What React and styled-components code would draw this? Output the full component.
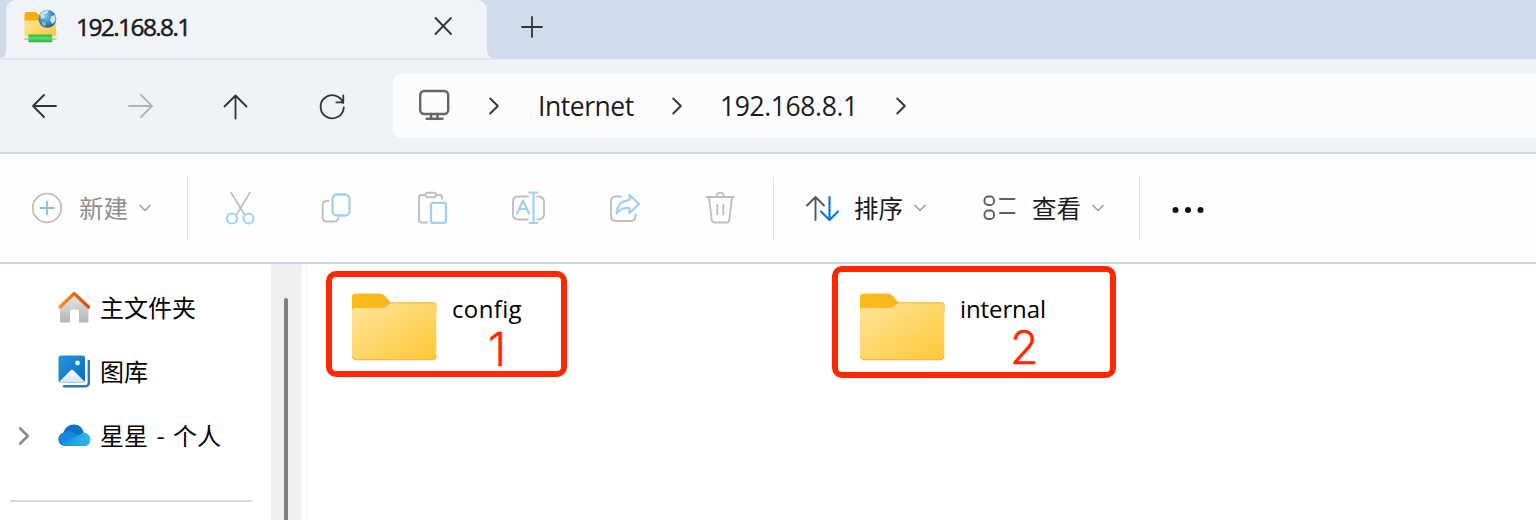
import React from 'react';
import styled, { createGlobalStyle } from 'styled-components';

const Global = createGlobalStyle`
  * { box-sizing: border-box; }
  body {
    margin: 0;
    overflow: hidden;
    background: #fff;
    font-family: "Open Sans", "Noto Sans CJK SC", sans-serif;
    color: #1b1b1b;
  }
  svg { display: block; flex: none; overflow: visible; }
`;

const Window = styled.div`
  width: 1536px;
  height: 520px;
  display: flex;
  flex-direction: column;
  overflow: hidden;
  background: #fff;
`;

const TabStrip = styled.div`
  height: 60px;
  flex: none;
  display: flex;
  background: #f0f4f9;
  border-bottom: 2px solid #dde6f0;
`;

const StripEdge = styled.div`
  width: 6px;
  background: #ccdaeb;
  border-bottom-right-radius: 6px;
`;

const TabSlot = styled.div`
  width: 481px;
  background: #cfdcec;
`;

const Tab = styled.div`
  height: 58px;
  display: flex;
  align-items: center;
  padding: 0 34px 4px 18px;
  background: #f0f4f9;
  border-radius: 10px 10px 0 0;
`;

const TabTitle = styled.span`
  flex: 1;
  margin-left: 18px;
  font-size: 24.5px;
  line-height: 32px;
  letter-spacing: -1.6px;
  -webkit-text-stroke: 0.5px #1b1b1b;
`;

const StripRest = styled.div`
  flex: 1;
  display: flex;
  align-items: center;
  padding: 0 0 3px 35px;
  background: #cfdcec;
  border-bottom: 1px solid #c3d1e2;
  border-bottom-left-radius: 8px;
`;

const NavBar = styled.div`
  height: 94px;
  flex: none;
  display: flex;
  align-items: center;
  padding: 0 0 1px 28px;
  background: #eff3f8;
  border-bottom: 2px solid #d0d9e5;
`;

const IconRow = styled.div`
  display: flex;
  gap: 64px;
`;

const AddressBar = styled.div`
  flex: 1;
  height: 64px;
  margin-left: 45px;
  padding-left: 25px;
  display: flex;
  align-items: center;
  background: #fbfcfe;
  border-radius: 8px 0 0 8px;
`;

const CrumbGap = styled.div`
  width: 39px;
`;

const Crumb = styled.span`
  width: ${(p) => p.$width}px;
  margin: 0 ${(p) => p.$after}px 0 ${(p) => p.$before}px;
  font-size: 26.5px;
  line-height: 36px;
  white-space: nowrap;
  letter-spacing: ${(p) => p.$tracking}px;
`;

const CommandBar = styled.div`
  height: 110px;
  flex: none;
  display: flex;
  align-items: center;
  padding-left: 31px;
  background: #fefefe;
  border-bottom: 2px solid #c9d3e1;
`;

const Command = styled.div`
  display: flex;
  align-items: center;
  width: ${(p) => p.$width}px;
  color: ${(p) => (p.$disabled ? '#8f8f8f' : '#1b1b1b')};
`;

const CommandLabel = styled.span`
  width: 48px;
  margin: 0 12px 0 ${(p) => p.$gap}px;
  font-family: "Noto Sans CJK SC", sans-serif;
  font-size: 24.5px;
  line-height: 36px;
  white-space: nowrap;
`;

const Divider = styled.div`
  width: 1px;
  height: 63px;
  background: #e3e3e3;
  margin-right: ${(p) => p.$after}px;
`;

const Body = styled.div`
  flex: 1;
  display: flex;
  min-height: 0;
`;

const Sidebar = styled.div`
  width: 271px;
  padding-top: 11px;
`;

const SideItem = styled.div`
  height: 64px;
  display: flex;
  align-items: center;
`;

const Expander = styled.div`
  width: 58px;
  padding: 2px 0 0 19px;
`;

const SideLabel = styled.span`
  margin-left: 9px;
  padding-bottom: 1px;
  font-family: "Noto Sans CJK SC", sans-serif;
  font-size: 24px;
  line-height: 36px;
  word-spacing: 3px;
  color: #000;
  white-space: pre;
`;

const SideRule = styled.div`
  width: 242px;
  height: 2px;
  margin: 33px 0 0 10px;
  background: #d9d9d9;
`;

const ScrollTrack = styled.div`
  width: 31px;
  padding: 34px 0 0 13px;
  background: #efefef;
`;

const ScrollThumb = styled.div`
  width: 4px;
  height: 260px;
  border-radius: 2px 2px 0 0;
  background: #808080;
`;

const Files = styled.div`
  flex: 1;
  margin-left: 4px;
  border-left: 1px solid #f2f2f2;
  padding: 29px 0 0 45px;
  display: flex;
  align-items: flex-start;
`;

const FileItem = styled.div`
  position: relative;
  width: 508px;
  display: flex;
`;

const FileName = styled.span`
  align-self: flex-start;
  margin-left: 14px;
  font-size: 24px;
  line-height: 32px;
  letter-spacing: ${(p) => p.$tracking}px;
  color: #000;
`;

const Marker = styled.div`
  position: absolute;
  left: ${(p) => p.$x}px;
  top: ${(p) => p.$y}px;
  width: ${(p) => p.$w}px;
  height: ${(p) => p.$h}px;
  border: 6px solid #ff2600;
  border-radius: 10px;
`;

const MarkerNumber = styled.span`
  position: absolute;
  left: ${(p) => p.$x}px;
  top: ${(p) => p.$y}px;
  font-family: Inter, sans-serif;
  font-size: 46.5px;
  font-weight: 300;
  -webkit-text-stroke: 0.4px #ff2600;
  line-height: 36px;
  color: #ff2600;
`;

const GREY = '#bfbfbf';
const BLUE = '#a3d0f2';

const Glyph = ({ w = 32, h = 32, stroke = '#333', sw = 1.8, children }) => (
  <svg width={w} height={h} viewBox={`0 0 ${w} ${h}`} fill="none" stroke={stroke}
    strokeWidth={sw} strokeLinecap="round" strokeLinejoin="round">{children}</svg>
);

const FtpIcon = () => (
  <svg width="34" height="34" viewBox="0 0 34 34">
    <defs>
      <linearGradient id="ftpBody" x1="0" y1="0" x2="1" y2="1">
        <stop offset="0" stopColor="#ffe597" /><stop offset="1" stopColor="#ffc83a" />
      </linearGradient>
      <radialGradient id="globe" cx=".4" cy=".35" r=".7">
        <stop offset="0" stopColor="#8cc6ea" /><stop offset=".6" stopColor="#3787bd" /><stop offset="1" stopColor="#235f94" />
      </radialGradient>
      <linearGradient id="pipe" x1="0" y1="0" x2="0" y2="1">
        <stop offset="0" stopColor="#2fb943" /><stop offset=".5" stopColor="#54df69" /><stop offset="1" stopColor="#28a93d" />
      </linearGradient>
    </defs>
    <path d="M.5 4a2 2 0 0 1 2-2H12l4 4v6H.5z" fill="#fbad08" />
    <path d="M.5 10.500H32V26.300H.5z" fill="url(#ftpBody)" />
    <path d="M0 29h32.500" stroke="#c9c9c9" strokeWidth="2" />
    <rect x="4.300" y="24.500" width="24" height="7.700" rx="1" fill="url(#pipe)" />
    <circle cx="23.300" cy="8.800" r="9" fill="url(#globe)" />
    <path d="M16 4.500c3-4 7-4.500 9-4l-2 3-3 1 1 3-3.500 1.500zM27.500 6l4-1v6l-3.500 3-2-4z" fill="#c9e5f3" />
    <path d="M18 11l4 2-1 3.500-3-2z" fill="#7eb9dc" />
  </svg>
);

const Close = () => (
  <Glyph w={20} h={20}><path d="M2.500 1 18 17M18 1 2.500 17" /></Glyph>
);
const Plus = () => (
  <Glyph w={20} h={20}><path d="M10 0v20M0 10h20" /></Glyph>
);
const ArrowLeft = () => (
  <Glyph><path d="M28 16H5M16 5 5 16l11 11" /></Glyph>
);
const ArrowRight = () => (
  <Glyph stroke="#b3b3b3"><path d="M5 16h23M17 5l11 11-11 11" /></Glyph>
);
const ArrowUp = () => (
  <Glyph><path d="M15.5 28.500V5.500M4.500 16.500l11-11 11 11" /></Glyph>
);
const Refresh = () => (
  <Glyph><path d="M27.200 13A11.600 11.600 0 1 0 27.800 17.500M27.300 5.500v6.800h-7" /></Glyph>
);
const Monitor = () => (
  <Glyph stroke="#666" sw={2.400}>
    <rect x="2.200" y="1" width="28" height="23" rx="4" />
    <path d="M13 24v5M19.500 24v5M8.500 28.700h16" />
  </Glyph>
);
const Chevron = ({ stroke, sw }) => (
  <Glyph w={10} h={18} stroke={stroke} sw={sw}><path d="M1.200 1.500 8.800 9l-7.600 7.500" /></Glyph>
);
const ChevronDown = () => (
  <Glyph w={12} h={8} stroke="#a3a3a3" sw={1.700}><path d="M1 1.500l5 5 5-5" /></Glyph>
);

const NewIcon = () => (
  <Glyph stroke={GREY} sw={1.800}>
    <circle cx="16" cy="16" r="14.300" />
    <path d="M16 9.500v13M9.500 16h13" stroke="#86c0ee" />
  </Glyph>
);
const Cut = () => (
  <Glyph stroke={GREY} sw={1.700}>
    <path d="M7 .500l13.500 22M26 .500l-13.500 22" />
    <g stroke={BLUE} strokeWidth="2.200" fill="#fff"><circle cx="8" cy="26.500" r="5" /><circle cx="24.500" cy="26.500" r="5" /></g>
  </Glyph>
);
const Copy = () => (
  <Glyph stroke={GREY} sw={1.900}>
    <path d="M8.500 9H6.500Q2.700 9 2.700 13v12.500q0 4 4 4H14q3.500 0 4.500-3.500" />
    <rect x="12.500" y="2.500" width="17" height="21" rx="4.500" stroke={BLUE} strokeWidth="2.300" />
  </Glyph>
);
const Paste = () => (
  <Glyph stroke={GREY} sw={1.900}>
    <path d="M9 3H5.500Q3 3 3 5.500V28q0 2.500 2.500 2.500H11M20 3h3.500Q26 3 26 5.500V7" />
    <rect x="9.500" y=".800" width="10.500" height="4.500" rx="2.200" />
    <rect x="15" y="10.800" width="15" height="20" rx="2" stroke={BLUE} strokeWidth="2.300" />
  </Glyph>
);
const Rename = () => (
  <Glyph stroke={GREY} sw={1.900}>
    <path d="M16 4.500H6.500Q1 4.500 1 10v12q0 5.500 5.500 5.500H16M25.500 4.500Q32 4.500 32 10v12q0 5.500-6.500 5.500" />
    <g stroke={BLUE} strokeWidth="2.200"><path d="M5 21.500 11 8.500l6 13M7.500 17h7.500M21.500 1v30M17.500.500h8M17.500 31h8" /></g>
  </Glyph>
);
const Share = () => (
  <Glyph stroke={GREY} sw={1.900}>
    <path d="M13 4.500H8Q3 4.500 3 9.500V24q0 5 5 5h14.500q5 0 5-5v-1.500" />
    <path d="M21.500 3 31 12l-9.500 9v-5Q13.500 15 8.500 21.500 9.500 9 21.500 8z" stroke={BLUE} strokeWidth="2.200" />
  </Glyph>
);
const Trash = () => (
  <Glyph stroke={GREY} sw={1.900}>
    <path d="M2.500 5H30M5 5l2.700 23Q8 30.500 10.500 30.500h12q2.500 0 2.800-2.500L28 5M12.500 5q0-4.300 3.800-4.300T20 5M13.300 13v9.500M19.300 13v9.500" />
  </Glyph>
);
const Sort = () => (
  <Glyph stroke="#555" sw={1.900}>
    <path d="M8.500 28V5M0 13.500 8.500 5l8.500 8.500" />
    <path d="M22.500 5v23M14 19.500l8.500 8.500 8.500-8.500" stroke="#0b7ad4" strokeWidth="2.200" />
  </Glyph>
);
const View = () => (
  <Glyph stroke="#606060" sw={1.900}>
    <rect x="1.500" y="4.500" width="9.500" height="8.500" rx="3.600" />
    <rect x="1.500" y="18.500" width="9.500" height="8.500" rx="3.600" />
    <path d="M17 7h14.500M17 21h14.500" />
  </Glyph>
);
const More = () => (
  <svg width="34" height="11" viewBox="0 0 34 11" fill="#111">
    <circle cx="4.500" cy="7" r="3" /><circle cx="17" cy="7" r="3" /><circle cx="29.500" cy="7" r="3" />
  </svg>
);

const HomeIcon = () => (
  <svg width="33" height="32" viewBox="0 0 33 32">
    <defs>
      <linearGradient id="wall" x1="0" y1="0" x2="0" y2="1"><stop offset="0" stopColor="#e8e8e8" /><stop offset="1" stopColor="#b5b5b5" /></linearGradient>
      <linearGradient id="roof" x1="0" y1="0" x2="1" y2="0"><stop offset="0" stopColor="#f39318" /><stop offset="1" stopColor="#d94b16" /></linearGradient>
    </defs>
    <path d="M2 15 16 3l14.500 12v15q0 1.500-1.500 1.500h-8V20q0-1.500-1.500-1.500h-6Q12 18.500 12 20v11.500H3.500Q2 31.500 2 30z" fill="url(#wall)" />
    <path d="M2 16 16.200 2.500 30.500 16" fill="none" stroke="url(#roof)" strokeWidth="3.300" strokeLinecap="round" strokeLinejoin="round" />
  </svg>
);
const GalleryIcon = () => (
  <svg width="33" height="33" viewBox="0 0 33 33">
    <defs>
      <linearGradient id="photo" x1="0" y1="0" x2="1" y2="1"><stop offset="0" stopColor="#2497dc" /><stop offset="1" stopColor="#0b6bbd" /></linearGradient>
      <linearGradient id="hill" x1="0" y1="0" x2="0" y2="1"><stop offset="0" stopColor="#fff" /><stop offset="1" stopColor="#cfe5f8" /></linearGradient>
    </defs>
    <path d="M30.800 6v21.500q0 3.800-4 3.800H6" fill="none" stroke="#3276b5" strokeWidth="2.400" strokeLinecap="round" />
    <rect x=".500" y=".500" width="26.500" height="27" rx="2.500" fill="url(#photo)" />
    <path d="M1.500 26.500 12.500 15.500q1.500-1.300 3 0L26.500 26.500q-1 1-2 1H3q-1 0-1.500-1z" fill="url(#hill)" />
    <circle cx="19.500" cy="8" r="2.400" fill="#e6f5ff" />
  </svg>
);
const CloudIcon = () => (
  <svg width="33" height="22" viewBox="0 0 33 22">
    <defs>
      <linearGradient id="cloudFront" x1="0" y1="0" x2="1" y2="0"><stop offset="0" stopColor="#1490df" /><stop offset="1" stopColor="#35b8f1" /></linearGradient>
    </defs>
    <path d="M5 9Q8 0 17 .500q7 .500 9 8.500 6 1 6 6.500 0 6-6 6.500H7Q.500 21 .500 15.500T5 9z" fill="#0f73c6" />
    <path d="M8 8q4-2 8 1l11 5-19 7Q.500 21 .500 15.500T5 9q1-1 3-1z" fill="#1389db" />
    <path d="M3 20 19 12l6-3q7.500.500 7.500 6.500T26 22H7q-2.500 0-4-2z" fill="url(#cloudFront)" />
  </svg>
);
const Folder = () => (
  <svg width="86" height="68" viewBox="0 0 86 68">
    <defs>
      <linearGradient id="folderFront" x1="0" y1="0" x2="1" y2="1"><stop offset="0" stopColor="#ffe49b" /><stop offset="1" stopColor="#ffc835" /></linearGradient>
      <linearGradient id="folderBack" x1="0" y1="0" x2="1" y2="0"><stop offset="0" stopColor="#fdbd1c" /><stop offset="1" stopColor="#efad1f" /></linearGradient>
    </defs>
    <path d="M0 4Q0 .500 3.500 .500h24q3 0 5 2L38.500 9.200H80.500q4 0 4 4V20H0z" fill="url(#folderBack)" />
    <path d="M0 18.500Q0 15 3.500 15h26q3 0 5-2l2-1.500q1.500-1.200 4-1.200h40q3.800 0 3.800 3.500V63q0 4-4 4H4q-4 0-4-4z" fill="url(#folderFront)" />
    <path d="M.500 63.500q.500 3.300 4 3.300h75.500q3.500 0 4.300-3.300" fill="none" stroke="#e5b44a" strokeWidth="1" />
  </svg>
);

export default function App() {
  return (
    <Window>
      <Global />
      <TabStrip>
        <StripEdge />
        <TabSlot>
          <Tab>
            <FtpIcon />
            <TabTitle>192.168.8.1</TabTitle>
            <Close />
          </Tab>
        </TabSlot>
        <StripRest><Plus /></StripRest>
      </TabStrip>

      <NavBar>
        <IconRow>
          <ArrowLeft /><ArrowRight /><ArrowUp /><Refresh />
        </IconRow>
        <AddressBar>
          <Monitor />
          <CrumbGap />
          <Chevron />
          <Crumb $width={99} $before={39} $after={35} $tracking={-0.45}>Internet</Crumb>
          <Chevron />
          <Crumb $width={138} $before={38} $after={38} $tracking={-0.4}>192.168.8.1</Crumb>
          <Chevron />
        </AddressBar>
      </NavBar>

      <CommandBar>
        <Command $width={156} $disabled><NewIcon /><CommandLabel $gap={16}>新建</CommandLabel><ChevronDown /></Command>
        <Divider $after={36} />
        <IconRow>
          <Cut /><Copy /><Paste /><Rename /><Share /><Trash />
        </IconRow>
        <Command $width={37} />
        <Divider $after={33} />
        <Command $width={176}><Sort /><CommandLabel $gap={15}>排序</CommandLabel><ChevronDown /></Command>
        <Command $width={156}><View /><CommandLabel $gap={17}>查看</CommandLabel><ChevronDown /></Command>
        <Divider $after={31} />
        <More />
      </CommandBar>

      <Body>
        <Sidebar>
          <SideItem><Expander /><HomeIcon /><SideLabel>主文件夹</SideLabel></SideItem>
          <SideItem><Expander /><GalleryIcon /><SideLabel>图库</SideLabel></SideItem>
          <SideItem>
            <Expander><Chevron stroke="#8a8a8a" sw={2.6} /></Expander>
            <CloudIcon /><SideLabel>星星 - 个人</SideLabel>
          </SideItem>
          <SideRule />
        </Sidebar>
        <ScrollTrack><ScrollThumb /></ScrollTrack>
        <Files>
          <FileItem>
            <Folder />
            <FileName $tracking={0.35}>config</FileName>
            <Marker $x={-26} $y={-22} $w={241} $h={106} />
            <MarkerNumber $x={136} $y={38}>1</MarkerNumber>
          </FileItem>
          <FileItem>
            <Folder />
            <FileName $tracking={-0.1}>internal</FileName>
            <Marker $x={-28} $y={-27} $w={284} $h={112} />
            <MarkerNumber $x={150} $y={36}>2</MarkerNumber>
          </FileItem>
        </Files>
      </Body>
    </Window>
  );
}
